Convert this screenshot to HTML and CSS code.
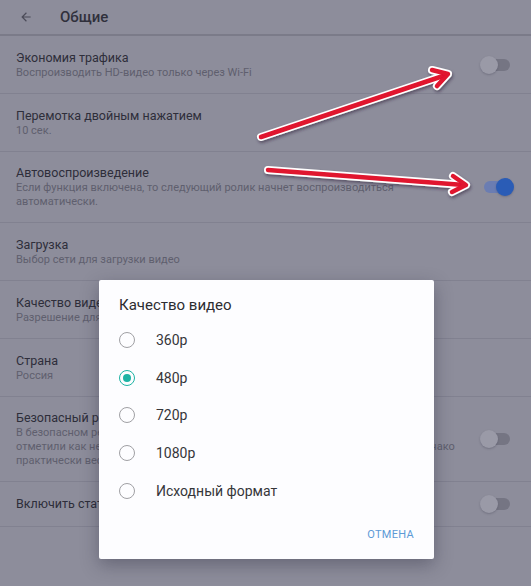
FILE: index.html
```html
<!DOCTYPE html>
<html lang="ru">
<head>
<meta charset="utf-8">
<title>Общие</title>
<link rel="stylesheet" href="styles.css">
</head>
<body>
<div class="screen">
  <header class="topbar">
    <svg class="back" viewBox="0 0 24 24" width="14" height="14"><path d="M20 11H7.8l5.6-5.6L12 4l-8 8 8 8 1.4-1.4L7.8 13H20z" fill="currentColor"/></svg>
    <h1 class="topbar-title">Общие</h1>
  </header>
  <ul class="settings">
    <li class="row">
      <div class="text"><div class="title">Экономия трафика</div><div class="sub">Воспроизводить HD-видео только через Wi-Fi</div></div>
      <span class="switch"><span class="thumb"></span></span>
    </li>
    <li class="row">
      <div class="text"><div class="title">Перемотка двойным нажатием</div><div class="sub">10 сек.</div></div>
    </li>
    <li class="row">
      <div class="text"><div class="title">Автовоспроизведение</div><div class="sub">Если функция включена, то следующий ролик начнет воспроизводиться<br>автоматически.</div></div>
      <span class="switch on"><span class="thumb"></span></span>
    </li>
    <li class="row">
      <div class="text"><div class="title">Загрузка</div><div class="sub">Выбор сети для загрузки видео</div></div>
    </li>
    <li class="row">
      <div class="text"><div class="title">Качество видео</div><div class="sub">Разрешение для воспроизведения</div></div>
    </li>
    <li class="row">
      <div class="text"><div class="title">Страна</div><div class="sub">Россия</div></div>
    </li>
    <li class="row">
      <div class="text"><div class="title">Безопасный режим</div><div class="sub">В безопасном режиме не показываются видео, которые пользователи<br>отметили как неприемлемые для детей. Фильтры работают не всегда точно, однако<br>практически весь нежелательный контент скрыт.</div></div>
      <span class="switch"><span class="thumb"></span></span>
    </li>
    <li class="row single">
      <div class="text"><div class="title">Включить статистику использования</div></div>
      <span class="switch"><span class="thumb"></span></span>
    </li>
  </ul>

  <svg class="arrows" width="531" height="586" viewBox="0 0 531 586">
    <defs>
      <filter id="sh" x="-10%" y="-50%" width="120%" height="200%">
        <feDropShadow dx="1" dy="2" stdDeviation="1.5" flood-color="#30203a" flood-opacity="0.55"/>
      </filter>
    </defs>
    <g filter="url(#sh)" fill="none" stroke-linecap="round" stroke-linejoin="round">
      <g stroke="#ffffff" stroke-width="8">
        <path d="M261 137 L446 75"/>
        <path d="M432 70 L448 74 L437 86"/>
        <path d="M268 170 L464 185"/>
        <path d="M453 176 L466 185 L452 192"/>
      </g>
      <g stroke="#e0122e" stroke-width="4.5">
        <path d="M261 137 L446 75"/>
        <path d="M432 70 L448 74 L437 86"/>
        <path d="M268 170 L464 185"/>
        <path d="M453 176 L466 185 L452 192"/>
      </g>
    </g>
  </svg>

  <div class="dialog">
    <h2 class="dialog-title">Качество видео</h2>
    <ul class="options">
      <li class="option"><span class="radio"></span><span class="label">360p</span></li>
      <li class="option"><span class="radio checked"></span><span class="label">480p</span></li>
      <li class="option"><span class="radio"></span><span class="label">720p</span></li>
      <li class="option"><span class="radio"></span><span class="label">1080p</span></li>
      <li class="option"><span class="radio"></span><span class="label">Исходный формат</span></li>
    </ul>
    <div class="actions"><span class="btn">ОТМЕНА</span></div>
  </div>
</div>
</body>
</html>
```

FILE: styles.css
```css
* { box-sizing: border-box; }
html, body { margin: 0; padding: 0; }
body {
  background: #8d8d9b;
  font-family: Roboto, "Noto Sans", "Liberation Sans", sans-serif;
  width: 531px;
  height: 586px;
  overflow: hidden;
}
.screen {
  position: relative;
  width: 531px;
  height: 586px;
}
.topbar {
  height: 36px;
  display: flex;
  align-items: center;
  padding-left: 19px;
  border-bottom: 2px solid #7b7b89;
  color: #2f2f3b;
}
.back { color: #4b4b58; margin-right: 27px; }
.topbar-title {
  margin: 0;
  font-size: 15px;
  font-weight: 500;
  color: #30303c;
}
.settings { list-style: none; margin: 0; padding: 0; }
.row {
  display: flex;
  align-items: center;
  justify-content: space-between;
  padding: 13px 17px 13px 16px;
  border-bottom: 1px solid #818190;
  min-height: 58px;
}
.row.single { min-height: 44px; }
.text { min-width: 0; }
.title {
  font-size: 12.5px;
  line-height: 16px;
  color: #2e2e3a;
}
.sub {
  font-size: 11px;
  line-height: 14px;
  color: #5f5f6e;
  white-space: nowrap;
}
.switch {
  position: relative;
  flex: none;
  width: 34px;
  height: 18px;
}
.switch::before {
  content: "";
  position: absolute;
  left: 4px;
  right: 4px;
  top: 3px;
  height: 12px;
  border-radius: 6px;
  background: #757583;
}
.switch .thumb {
  position: absolute;
  left: 0;
  top: 0;
  width: 18px;
  height: 18px;
  border-radius: 50%;
  background: #9a9aa7;
  box-shadow: 0 1px 2px rgba(40,40,60,0.25);
}
.switch.on::before { background: #6b7db2; }
.switch.on .thumb { left: auto; right: 0; background: #2a5cb6; }

.arrows {
  position: absolute;
  left: 0;
  top: 0;
  pointer-events: none;
}

.dialog {
  position: absolute;
  left: 99px;
  top: 280px;
  width: 335px;
  height: 279px;
  background: #fdfdff;
  border-radius: 2px;
  box-shadow: 0 6px 18px rgba(30,30,50,0.35);
  padding: 15px 20px 6px 20px;
  display: flex;
  flex-direction: column;
}
.dialog-title {
  margin: 0;
  font-size: 15px;
  font-weight: 400;
  line-height: 20px;
  color: #2c2c30;
}
.options { list-style: none; margin: 6px 0 0 0; padding: 0; }
.option {
  height: 37.8px;
  display: flex;
  align-items: center;
}
.radio {
  width: 16px;
  height: 16px;
  border-radius: 50%;
  border: 1.5px solid #a0a0a4;
  margin-right: 21px;
  display: flex;
  align-items: center;
  justify-content: center;
}
.radio.checked { border-color: #1db3a4; }
.radio.checked::after {
  content: "";
  width: 8px;
  height: 8px;
  border-radius: 50%;
  background: #1db3a4;
}
.label {
  font-size: 14px;
  color: #36363a;
}
.actions {
  margin-top: auto;
  height: 36px;
  display: flex;
  align-items: center;
  justify-content: flex-end;
  margin-bottom: 1px;
}
.btn {
  font-size: 11px;
  letter-spacing: 0.3px;
  color: #5c9ad6;
}
```
